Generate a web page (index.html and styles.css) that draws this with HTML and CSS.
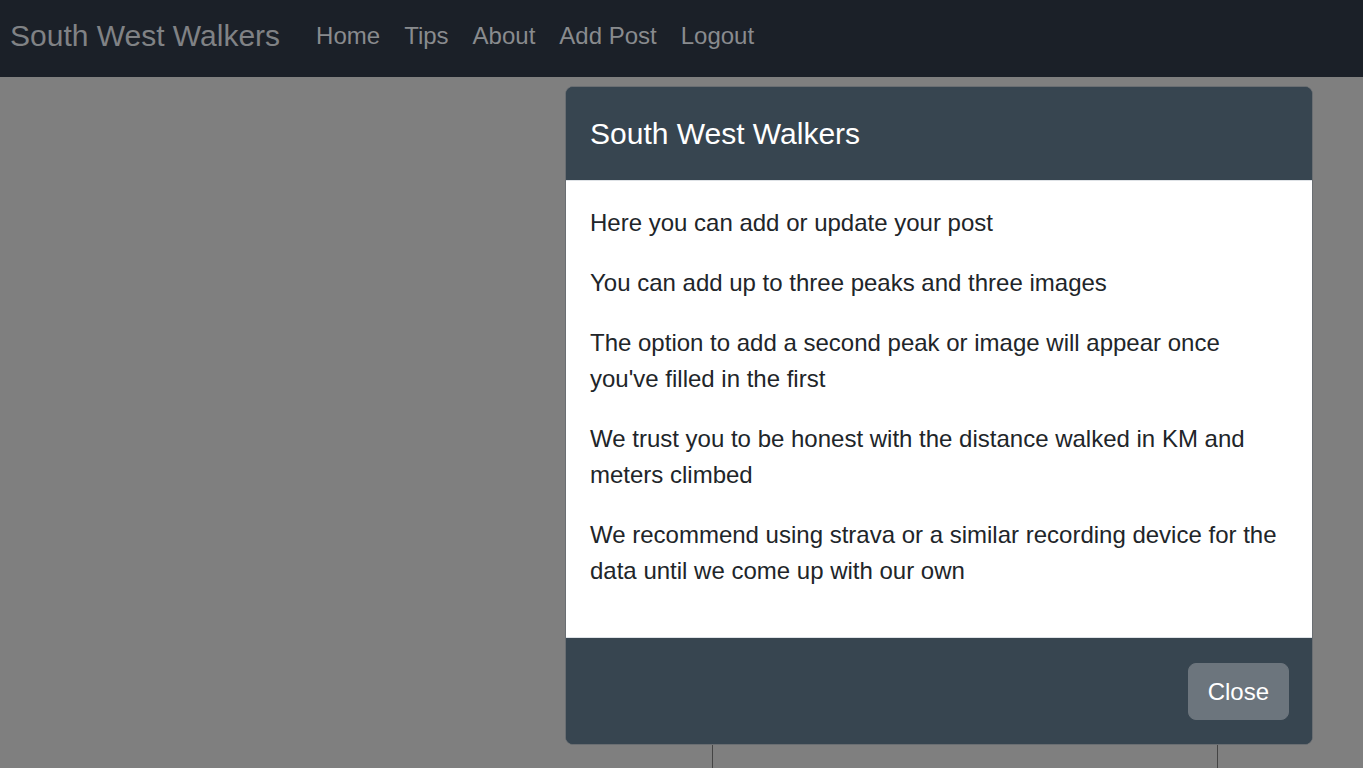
FILE: index.html
```html
<!DOCTYPE html>
<html lang="en">
<head>
<meta charset="utf-8">
<title>South West Walkers</title>
<link rel="stylesheet" href="styles.css">
</head>
<body>
<nav class="navbar">
  <a class="brand" href="#">South West Walkers</a>
  <ul class="nav-links">
    <li><a href="#">Home</a></li>
    <li><a href="#">Tips</a></li>
    <li><a href="#">About</a></li>
    <li><a href="#">Add Post</a></li>
    <li><a href="#">Logout</a></li>
  </ul>
</nav>
<main class="page">
  <div class="behind-card"></div>
</main>
<div class="backdrop"></div>
<div class="modal">
  <div class="modal-header">
    <h5 class="modal-title">South West Walkers</h5>
  </div>
  <div class="modal-body">
    <p>Here you can add or update your post</p>
    <p>You can add up to three peaks and three images</p>
    <p>The option to add a second peak or image will appear once you've filled in the first</p>
    <p>We trust you to be honest with the distance walked in KM and meters climbed</p>
    <p>We recommend using strava or a similar recording device for the data until we come up with our own</p>
  </div>
  <div class="modal-footer">
    <button class="btn-close-modal" type="button">Close</button>
  </div>
</div>
</body>
</html>
```

FILE: styles.css
```css
* { box-sizing: border-box; }
html, body { margin: 0; padding: 0; }
body {
  font-family: "Liberation Sans", Arial, sans-serif;
  font-size: 24px;
  line-height: 1.5;
  color: #212529;
  background: #fff;
  width: 1363px;
  height: 768px;
  overflow: hidden;
}
.navbar {
  height: 77px;
  background: #1b2028;
  display: flex;
  align-items: center;
  padding: 0 10px 6px;
}
.brand {
  font-size: 30px;
  color: #808285;
  text-decoration: none;
  margin-right: 36px;
  line-height: 45px;
}
.nav-links {
  display: flex;
  list-style: none;
  margin: 0;
  padding: 0;
  gap: 24px;
}
.nav-links a {
  color: #898b8e;
  text-decoration: none;
  font-size: 24px;
  line-height: 36px;
}
.page {
  position: relative;
  height: 691px;
  background: #fff;
  overflow: hidden;
}
.behind-card {
  position: absolute;
  left: 712px;
  top: 600px;
  width: 506px;
  height: 91px;
  border-left: 1px solid #888;
  border-right: 1px solid #888;
}
.backdrop {
  position: fixed;
  left: 0;
  top: 77px;
  right: 0;
  bottom: 0;
  background: rgba(0, 0, 0, 0.5);
}
.modal {
  position: fixed;
  left: 565px;
  top: 86px;
  width: 748px;
  border: 1px solid #6a6e72;
  border-radius: 8px;
  overflow: hidden;
  background: #37454f;
}
.modal-header {
  background: #374550;
  padding: 24px 24px;
  border-bottom: 1px solid #dee2e6;
}
.modal-title {
  margin: 0;
  font-size: 30px;
  font-weight: 400;
  line-height: 45px;
  color: #fff;
}
.modal-body {
  background: #fff;
  padding: 24px;
}
.modal-body p {
  margin: 0 0 24px;
}
.modal-footer {
  background: #374550;
  border-top: 1px solid #dee2e6;
  padding: 25px 23px 24px;
  display: flex;
  justify-content: flex-end;
}
.btn-close-modal {
  font-family: "Liberation Sans", Arial, sans-serif;
  font-size: 24px;
  line-height: 36px;
  padding: 9.5px 19px;
  background: #6c757d;
  border: 1px solid #6c757d;
  color: #fff;
  border-radius: 8px;
}
```
